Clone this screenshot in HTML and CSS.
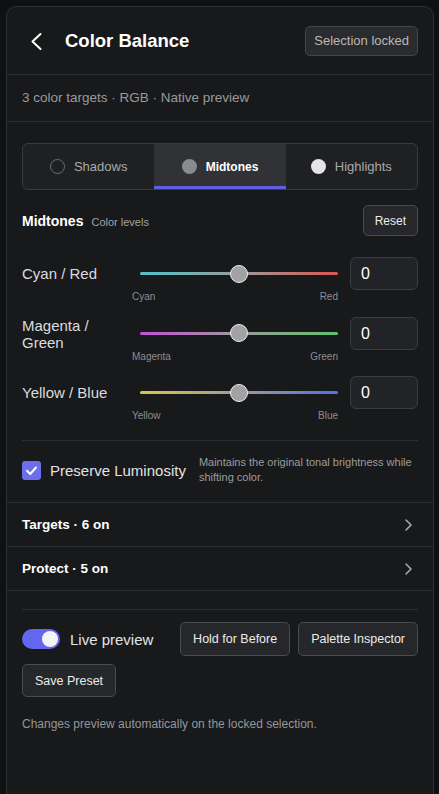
FILE: index.html
```html
<!DOCTYPE html>
<html lang="en">
<head>
  <meta charset="UTF-8" />
  <meta name="viewport" content="width=device-width, initial-scale=1.0"/>
  <title>Color Balance</title>
  <link rel="stylesheet" href="styles.css">
</head>
<body>

  <div class="panel">
    <header class="panel-head">
      <button class="back-btn" aria-label="Back">
        <svg width="28" height="28" viewBox="0 0 28 28"><polyline points="18.5,7 10.5,14.5 18.5,22" fill="none" stroke="#fff" stroke-width="2" stroke-linecap="round" stroke-linejoin="round"/></svg>
      </button>
      <h1 class="title">Color Balance</h1>
      <span class="lock-pill">Selection locked</span>
    </header>

    <div class="meta">3 color targets · RGB · Native preview</div>

    <section class="body">
      <div class="tabs">
        <div class="tab"><span class="dot dot-shadow"></span>Shadows</div>
        <div class="tab active"><span class="dot dot-mid"></span>Midtones</div>
        <div class="tab"><span class="dot dot-high"></span>Highlights</div>
      </div>

      <div class="levels-head">
        <div><span class="levels-title">Midtones</span><span class="levels-sub">Color levels</span></div>
        <button class="btn btn-small">Reset</button>
      </div>

      <div class="sliders">
        <div class="slider-row">
          <div class="slider-label">Cyan / Red</div>
          <div class="slider">
            <div class="track-wrap">
              <div class="track track-cr"></div>
              <div class="thumb" style="left: 50%"></div>
            </div>
            <div class="ticks"><span>Cyan</span><span>Red</span></div>
          </div>
          <div class="num">0</div>
        </div>
        <div class="slider-row">
          <div class="slider-label">Magenta / Green</div>
          <div class="slider">
            <div class="track-wrap">
              <div class="track track-mg"></div>
              <div class="thumb" style="left: 50%"></div>
            </div>
            <div class="ticks"><span>Magenta</span><span>Green</span></div>
          </div>
          <div class="num">0</div>
        </div>
        <div class="slider-row">
          <div class="slider-label">Yellow / Blue</div>
          <div class="slider">
            <div class="track-wrap">
              <div class="track track-yb"></div>
              <div class="thumb" style="left: 50%"></div>
            </div>
            <div class="ticks"><span>Yellow</span><span>Blue</span></div>
          </div>
          <div class="num">0</div>
        </div>
      </div>

      <div class="preserve">
        <div class="check">
          <svg width="19" height="19" viewBox="0 0 19 19"><polyline points="5,9.8 8.2,13 14,6.5" fill="none" stroke="#fff" stroke-width="2" stroke-linecap="round" stroke-linejoin="round"/></svg>
        </div>
        <span class="preserve-label">Preserve Luminosity</span>
        <p class="preserve-desc">Maintains the original tonal brightness while shifting color.</p>
      </div>
    </section>

    <div class="list">
      <div class="list-row">
        <span>Targets · 6 on</span>
        <svg width="10" height="14" viewBox="0 0 10 14"><polyline points="3,2 8,7 3,12" fill="none" stroke="#a8a8a8" stroke-width="1.6" stroke-linecap="round" stroke-linejoin="round"/></svg>
      </div>
      <div class="list-row">
        <span>Protect · 5 on</span>
        <svg width="10" height="14" viewBox="0 0 10 14"><polyline points="3,2 8,7 3,12" fill="none" stroke="#a8a8a8" stroke-width="1.6" stroke-linecap="round" stroke-linejoin="round"/></svg>
      </div>
    </div>

    <footer class="foot">
      <div class="actions">
        <div class="live">
          <span class="toggle"><span class="knob"></span></span>
          <span class="live-label">Live preview</span>
        </div>
        <button class="btn">Hold for Before</button>
        <button class="btn">Palette Inspector</button>
        <button class="btn btn-save">Save Preset</button>
      </div>
      <p class="note">Changes preview automatically on the locked selection.</p>
    </footer>
  </div>

</body>
</html>
```

FILE: styles.css
```css
* {
  margin: 0;
  padding: 0;
  box-sizing: border-box;
  font-family: "Liberation Sans", Arial, sans-serif;
}

html, body {
  overflow: hidden;
}

body {
  background-color: #0f1012;
  color: #e8e8e8;
  height: 794px;
}

.panel {
  width: 428px;
  height: 840px;
  margin: 6px 0 0 6px;
  background-color: #18191b;
  border: 1px solid #2e2f32;
  border-radius: 10px;
}

/* header */
.panel-head {
  display: flex;
  align-items: center;
  height: 68px;
  padding: 0 15px;
  border-bottom: 1px solid #2c2d30;
}

.back-btn {
  background: none;
  border: none;
  width: 28px;
  height: 28px;
  display: flex;
}

.title {
  margin-left: 15px;
  font-size: 18.5px;
  font-weight: bold;
  color: #fff;
  flex: 1;
}

.lock-pill {
  font-size: 13px;
  color: #b9b9b9;
  background-color: #2a2b2e;
  border: 1px solid #444548;
  border-radius: 5px;
  padding: 0 8px;
  height: 30px;
  line-height: 28px;
}

.meta {
  padding: 14px 15px;
  line-height: 18px;
  font-size: 13.5px;
  color: #9a9a9c;
  border-bottom: 1px solid #2c2d30;
}

.body {
  padding: 21px 15px 0;
}

/* segmented tabs */
.tabs {
  display: grid;
  grid-template-columns: 1fr 1fr 1fr;
  height: 47px;
  border: 1px solid #3a3b3e;
  border-radius: 6px;
  background-color: #1f2022;
  overflow: hidden;
}

.tab {
  display: flex;
  align-items: center;
  justify-content: center;
  gap: 9px;
  font-size: 13px;
  color: #a9a9ab;
}

.tab.active {
  background-color: #303236;
  color: #fff;
  font-weight: bold;
  font-size: 12px;
  box-shadow: inset 0 -3px 0 #5c60e0;
}

.dot {
  width: 15px;
  height: 15px;
  border-radius: 50%;
}

.dot-shadow {
  border: 1.5px solid #6d6e71;
}

.dot-mid {
  background-color: #8a8b8e;
}

.dot-high {
  background-color: #e4e4e6;
}

.levels-head {
  display: flex;
  justify-content: space-between;
  align-items: center;
  margin-top: 15px;
}

.levels-title {
  font-size: 14px;
  font-weight: bold;
  color: #fff;
}

.levels-sub {
  margin-left: 8px;
  font-size: 11px;
  color: #a3a3a5;
}

.btn {
  font-size: 12.5px;
  color: #ececec;
  background-color: #26272a;
  border: 1px solid #4a4b4e;
  border-radius: 5px;
  padding: 0 12px;
  height: 34px;
}

.btn-small {
  font-size: 12px;
  height: 31px;
  padding: 0 11px;
}

/* sliders */
.sliders {
  margin-top: 21px;
  display: flex;
  flex-direction: column;
  gap: 12.5px;
}

.slider-row {
  display: grid;
  grid-template-columns: 98px 206px 68px;
  column-gap: 12px;
  align-items: start;
}

.slider-label {
  min-height: 33px;
  display: flex;
  align-items: center;
  font-size: 15px;
  line-height: 17px;
  color: #dcdcde;
}

.track-wrap {
  position: relative;
  height: 33px;
  margin-left: 8px;
  display: flex;
  align-items: center;
}

.track {
  width: 100%;
  height: 3px;
  border-radius: 2px;
}

.track-cr {
  background: linear-gradient(to right, #4fc3ca, #9b9b9b 50%, #dc554f);
}

.track-mg {
  background: linear-gradient(to right, #c54fd6, #9b9b9b 50%, #5fc06b);
}

.track-yb {
  background: linear-gradient(to right, #d8c645, #9b9b9b 50%, #4f72de);
}

.thumb {
  position: absolute;
  top: 7.5px;
  width: 18px;
  height: 18px;
  margin-left: -9px;
  border-radius: 50%;
  background-color: #a2a2a4;
  border: 1.5px solid #ececec;
}

.ticks {
  display: flex;
  justify-content: space-between;
  height: 14px;
  line-height: 14px;
  font-size: 10px;
  color: #8d8d90;
}

.num {
  height: 33px;
  border: 1px solid #3b3c3f;
  border-radius: 6px;
  background-color: #222326;
  padding-left: 10px;
  line-height: 31px;
  font-size: 16px;
  color: #fff;
}

/* preserve luminosity */
.preserve {
  margin-top: 17px;
  border-top: 1px solid #2c2d30;
  padding: 14px 0 17px;
  display: flex;
  align-items: center;
}

.check {
  width: 19px;
  height: 19px;
  border-radius: 3px;
  background-color: #6c6fec;
  display: flex;
}

.preserve-label {
  margin-left: 9px;
  font-size: 15px;
  color: #e2e2e4;
  white-space: nowrap;
}

.preserve-desc {
  margin-left: 13px;
  font-size: 11px;
  line-height: 15px;
  color: #9c9c9f;
}

/* list rows */
.list {
  border-top: 1px solid #2c2d30;
}

.list-row {
  display: flex;
  justify-content: space-between;
  align-items: center;
  height: 44px;
  padding: 0 20px 0 15px;
  border-bottom: 1px solid #2c2d30;
  font-size: 13.5px;
  font-weight: bold;
  color: #fff;
}

/* footer */
.foot {
  padding: 18px 15px 0;
}

.actions {
  border-top: 1px solid #2c2d30;
  padding-top: 12px;
  display: flex;
  flex-wrap: wrap;
  align-items: center;
  gap: 8px;
}

.live {
  display: flex;
  align-items: center;
  margin-right: auto;
}

.toggle {
  width: 38px;
  height: 20px;
  border-radius: 10px;
  background-color: #6366ee;
  display: flex;
  align-items: center;
  justify-content: flex-end;
  padding: 0 2px;
}

.knob {
  width: 16px;
  height: 16px;
  border-radius: 50%;
  background-color: #f4f4f6;
}

.live-label {
  margin-left: 10px;
  font-size: 15px;
  color: #e4e4e6;
}

.btn-save {
  height: 33px;
}

.note {
  margin-top: 19px;
  font-size: 12px;
  line-height: 16px;
  color: #96969a;
}
```
